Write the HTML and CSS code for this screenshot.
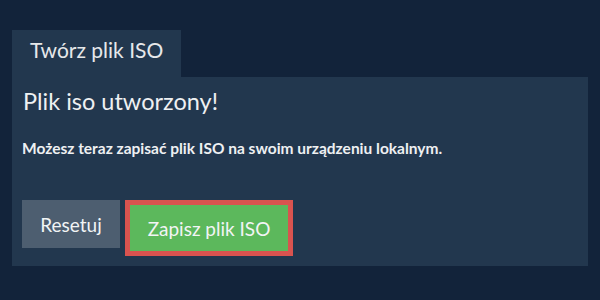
FILE: index.html
```html
<!DOCTYPE html>
<html lang="pl">
<head>
<meta charset="utf-8">
<title>Twórz plik ISO</title>
<link rel="stylesheet" href="styles.css">
</head>
<body>
<div class="wrap">
  <div class="tabs">
    <div class="tab">Twórz plik ISO</div>
  </div>
  <div class="panel">
    <h2 class="title">Plik iso utworzony!</h2>
    <p class="msg">Możesz teraz zapisać plik ISO na swoim urządzeniu lokalnym.</p>
    <div class="actions">
      <button class="btn btn-reset">Resetuj</button>
      <button class="btn btn-save">Zapisz plik ISO</button>
    </div>
  </div>
</div>
</body>
</html>
```
FILE: styles.css
```css
html, body {
  margin: 0;
  padding: 0;
}
body {
  background: #12233a;
  font-family: Lato, "Open Sans", sans-serif;
  color: #eef0f2;
  width: 600px;
  height: 300px;
  overflow: hidden;
}
.wrap {
  padding: 30px 12px 0 12px;
}
.tabs {
  display: flex;
}
.tab {
  background: #22374e;
  width: 169px;
  height: 47px;
  box-sizing: border-box;
  padding: 6.5px 0 0 18px;
  font-size: 21px;
  font-weight: 400;
  line-height: 25px;
  white-space: nowrap;
  color: #e6e8ea;
}
.panel {
  background: #22374e;
  padding: 10px 10px 10px 10px;
}
.title {
  margin: 0 0 24px 1px;
  font-size: 23.5px;
  font-weight: 400;
  line-height: normal;
  color: #eef0f2;
}
.msg {
  margin: 0 0 43px 0;
  font-size: 15.5px;
  font-weight: 700;
  line-height: normal;
}
.actions {
  display: flex;
  align-items: flex-start;
  gap: 5px;
}
.btn {
  font-family: Lato, "Open Sans", sans-serif;
  font-size: 19px;
  font-weight: 400;
  color: #f2f4f5;
  border: none;
  margin: 0;
  padding: 0;
  cursor: pointer;
}
.btn-reset {
  background: #4d5e70;
  width: 98px;
  height: 48px;
}
.btn-save {
  background: #5cb85c;
  width: 168px;
  height: 56px;
  border: 5px solid #d9534f;
  box-sizing: border-box;
}
```
